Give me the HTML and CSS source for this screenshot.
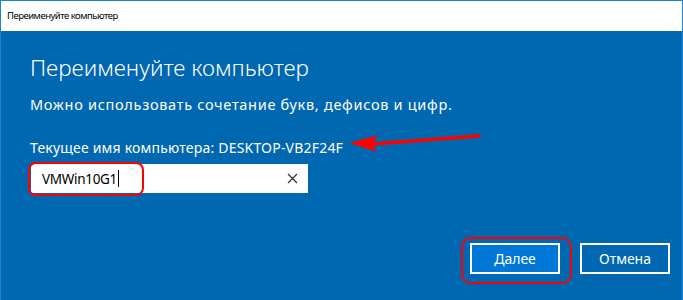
FILE: index.html
```html
<!DOCTYPE html>
<html lang="ru">
<head>
  <meta charset="UTF-8">
  <title>Переименуйте компьютер</title>
  <link rel="stylesheet" href="styles.css">
</head>
<body>
  <div class="window">
    <!-- Заголовок окна -->
    <div class="titlebar">Переименуйте компьютер</div>

    <!-- Содержимое -->
    <div class="content">
      <h1>Переименуйте компьютер</h1>
      <p class="hint">Можно использовать сочетание букв, дефисов и цифр.</p>
      <p class="current">Текущее имя компьютера: DESKTOP-VB2F24F</p>

      <div class="field">
        <span class="value">VMWin10G1<span class="caret"></span></span>
        <span class="clear">
          <svg width="11" height="11" viewBox="0 0 11 11"><path d="M1 1L10 10M10 1L1 10" stroke="#333" stroke-width="1.3"/></svg>
        </span>
        <span class="mark mark-field"></span>
      </div>

      <div class="buttons">
        <button class="btn btn-primary">Далее<span class="mark mark-btn"></span></button>
        <button class="btn">Отмена</button>
      </div>
    </div>

    <!-- Стрелка-пометка -->
    <svg class="arrow" width="683" height="300" viewBox="0 0 683 300">
      <g fill="#f00" stroke="#f00">
        <path d="M372 144L479 136" stroke-width="3.5" stroke-linecap="round"/>
        <path d="M351 143L377 136L372 144L376 151Z" stroke-width="1" stroke-linejoin="round"/>
      </g>
    </svg>
  </div>
</body>
</html>
```

FILE: styles.css
```css
/* Общие стили */
body {
  margin: 0;
  font-family: 'Noto Sans', 'Open Sans', sans-serif;
  background: #fff;
}

.window {
  position: relative;
  width: 681px;
  height: 299px;
  border: 1px solid #1a85d8;
  border-bottom: none;
  background: #0067b1;
  overflow: hidden;
}

.titlebar {
  height: 30px;
  line-height: 30px;
  background: #fff;
  color: #000;
  font-size: 9.5px;
  letter-spacing: -0.5px;
  padding-left: 6px;
}

.content {
  padding: 0 12px 0 29px;
  color: #fff;
}

h1 {
  margin: 21px 0 0;
  font-size: 22.5px;
  font-weight: 300;
  line-height: 32px;
}

.hint {
  margin: 10px 0 0;
  font-size: 14.5px;
  letter-spacing: 0.7px;
  line-height: 20px;
}

.current {
  margin: 24px 0 0;
  font-size: 14px;
  letter-spacing: 0.2px;
  line-height: 20px;
}

/* Поле ввода */
.field {
  position: relative;
  display: flex;
  align-items: center;
  justify-content: space-between;
  width: 277px;
  height: 29px;
  margin-top: 6px;
  margin-left: 1px;
  background: #fff;
  color: #000;
  font-size: 13.5px;
  letter-spacing: -0.3px;
  box-sizing: border-box;
  padding: 0 10px 0 11px;
}

.value {
  display: flex;
  align-items: center;
}

.caret {
  display: inline-block;
  width: 1px;
  height: 17px;
  margin-left: 1px;
  background: #000;
}

.clear {
  display: flex;
}

/* Пометки красным */
.mark {
  position: absolute;
  border: 2.5px solid #f00;
  border-radius: 8px;
  box-sizing: border-box;
  pointer-events: none;
}

.mark-field {
  left: -3px;
  top: -2px;
  width: 116px;
  height: 34px;
}

.mark-btn {
  left: -11px;
  top: -8px;
  width: 111px;
  height: 47px;
  border-radius: 10px;
}

/* Кнопки */
.buttons {
  display: flex;
  justify-content: flex-end;
  gap: 20px;
  margin-top: 50px;
}

.btn {
  position: relative;
  width: 90px;
  height: 31px;
  border: 2px solid #fff;
  background: transparent;
  color: #fff;
  font-family: inherit;
  font-size: 14px;
  padding: 0;
}

.btn-primary {
  background: #0078d7;
}

.arrow {
  position: absolute;
  left: -1px;
  top: -1px;
  pointer-events: none;
}
```
